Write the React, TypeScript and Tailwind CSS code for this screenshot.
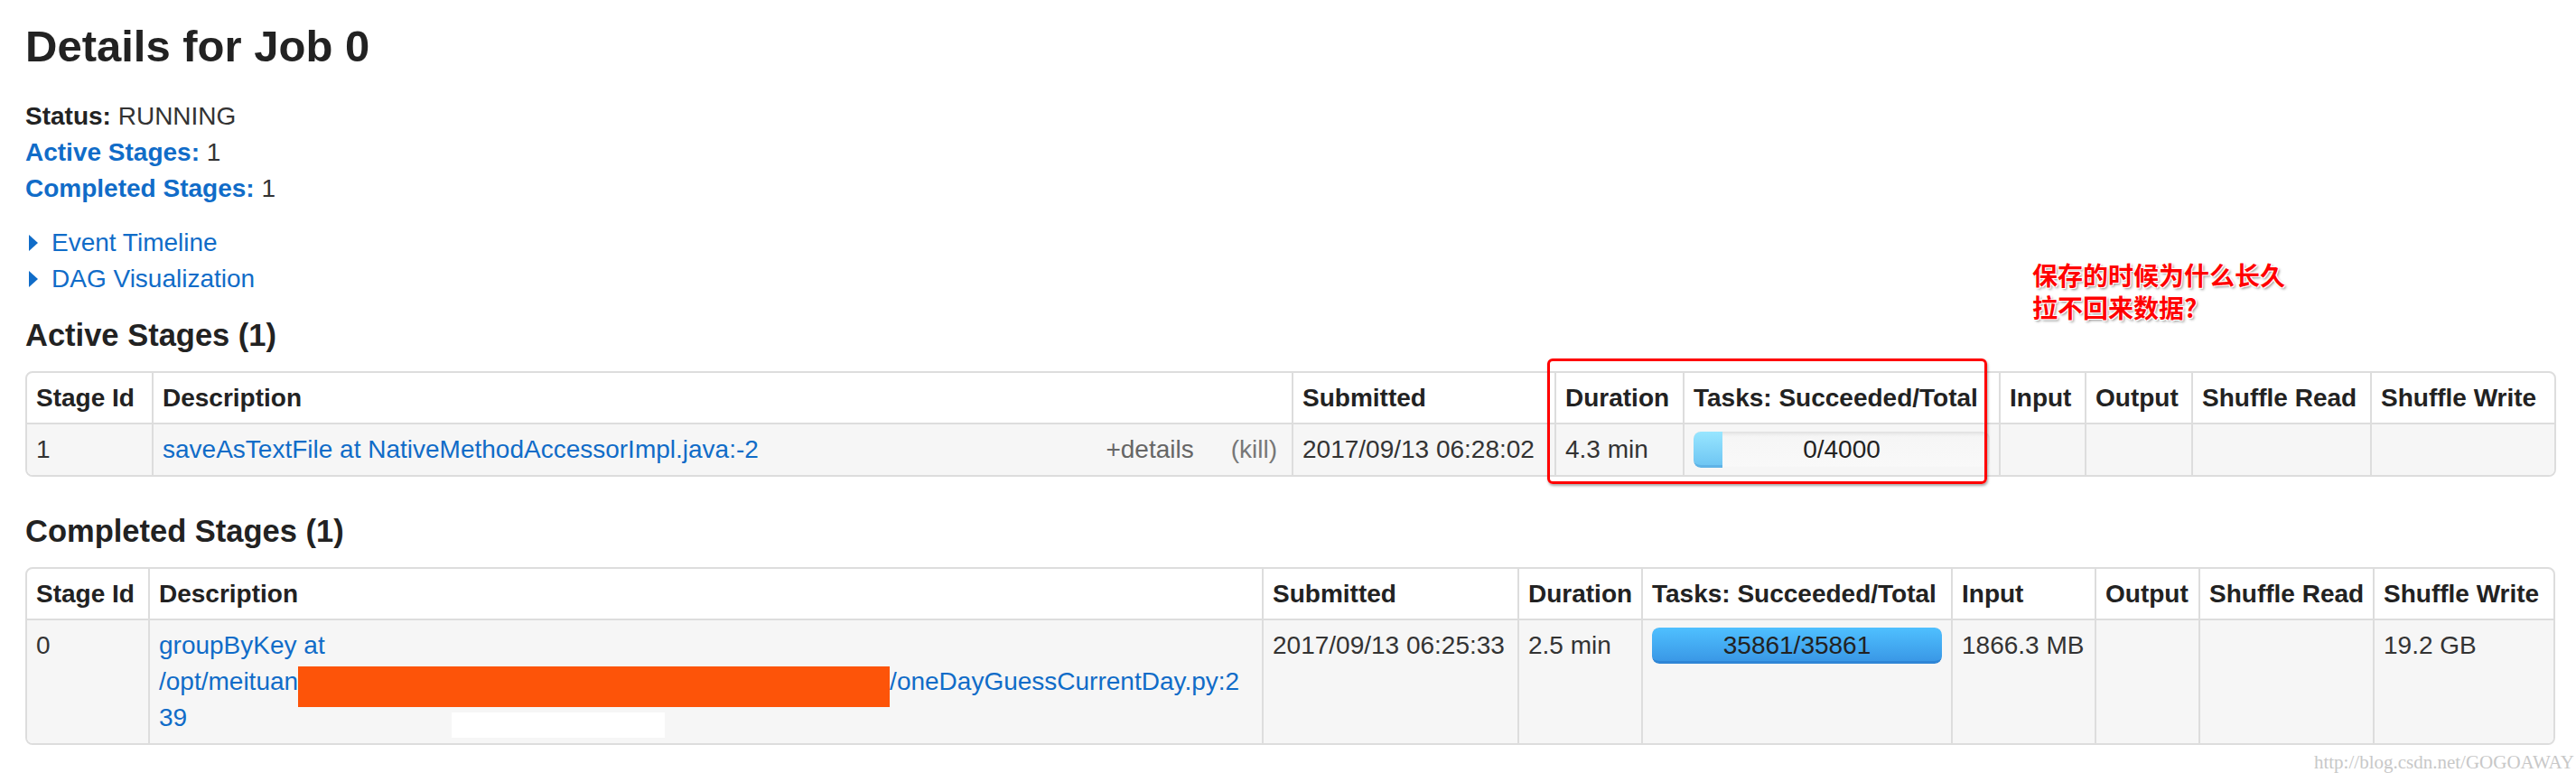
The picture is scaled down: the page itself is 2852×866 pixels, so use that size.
import React from "react";

const LINK = "text-[#106cc8]";

const activeCols = [138, 1262, 291, 142, 350, 95, 118, 198, 204];
const completedCols = [134, 1233, 283, 137, 343, 159, 115, 193, 200];

const headers = [
  "Stage Id",
  "Description",
  "Submitted",
  "Duration",
  "Tasks: Succeeded/Total",
  "Input",
  "Output",
  "Shuffle Read",
  "Shuffle Write",
];

const Triangle = () => (
  <span className="inline-block w-0 h-0 ml-[4px] border-y-[9.5px] border-y-transparent border-l-[10px] border-l-[#106cc8]" />
);

// progress bar like spark's, running = light blue sliver, completed = full blue
const Progress = ({ label, done }: { label: string; done: boolean }) => {
  return (
    <div className="relative h-[40px] rounded-[8px] overflow-hidden bg-gradient-to-b from-[#f5f5f5] to-[#f9f9f9] shadow-[inset_0_2px_4px_rgba(0,0,0,0.1)]">
      {done ? (
        <div className="absolute inset-0 rounded-[8px] bg-gradient-to-b from-[#4fc0ff] to-[#3a98e6] border-b-[3px] border-[#2f86d6]" />
      ) : (
        <div className="absolute left-0 top-0 bottom-0 w-[32px] rounded-l-[8px] bg-gradient-to-b from-[#98e6ff] to-[#6fc6f3] border-b-[3px] border-[#5fb3e6]" />
      )}
      <span className="absolute inset-0 text-center leading-[40px] text-[#222]">{label}</span>
    </div>
  );
};

const StageTable = ({ cols, cells }: { cols: number[]; cells: React.ReactNode[] }) => {
  const total = cols.reduce((a, b) => a + b, 0);
  return (
    <table
      className="table-fixed border-separate border-spacing-0 border-2 border-[#ddd] rounded-[8px] text-[28px] leading-[40px]"
      style={{ width: total }}
    >
      <colgroup>
        {cols.map((w, i) => (
          <col key={i} style={{ width: w }} />
        ))}
      </colgroup>
      <thead>
        <tr>
          {headers.map((h, i) => (
            <th
              key={h}
              className={
                "px-[10px] pt-[8px] pb-[7px] text-left font-bold whitespace-nowrap text-[#222] " +
                (i > 0 ? "border-l-2 border-[#ddd]" : "")
              }
            >
              {h}
            </th>
          ))}
        </tr>
      </thead>
      <tbody>
        <tr>
          {cells.map((c, i) => (
            <td
              key={i}
              className={
                "relative px-[10px] py-[8px] align-top bg-[#f6f6f6] border-t-2 border-[#ddd] whitespace-nowrap " +
                (i > 0 ? "border-l-2 " : "rounded-bl-[6px] ") +
                (i === cells.length - 1 ? "rounded-br-[6px]" : "")
              }
            >
              {c}
            </td>
          ))}
        </tr>
      </tbody>
    </table>
  );
};

export default function App() {
  return (
    <div className="relative w-[2852px] h-[866px] overflow-hidden bg-white text-[#333] font-['Liberation_Sans',Arial,sans-serif]">
      <div className="pl-[28px] pr-[25px] pt-[24px]">
        <h1 className="text-[49px] leading-[54px] font-bold text-[#222]">Details for Job 0</h1>

        <ul className="mt-[31px] text-[28px] leading-[40px]">
          <li>
            <strong className="text-[#222]">Status:</strong> RUNNING
          </li>
          <li>
            <a className={"font-bold " + LINK}>Active Stages:</a> 1
          </li>
          <li>
            <a className={"font-bold " + LINK}>Completed Stages:</a> 1
          </li>
        </ul>

        <ul className={"mt-[20px] text-[28px] leading-[40px] " + LINK}>
          <li className="flex items-center gap-[15px]">
            <Triangle />
            <span>Event Timeline</span>
          </li>
          <li className="flex items-center gap-[15px]">
            <Triangle />
            <span>DAG Visualization</span>
          </li>
        </ul>

        <h4 className="mt-[22px] text-[34.5px] leading-[40px] font-bold text-[#222]">Active Stages (1)</h4>
        <div className="mt-[20px]">
          <StageTable
            cols={activeCols}
            cells={[
              "1",
              <div className="flex justify-between pr-[6px]">
                <a className={LINK}>saveAsTextFile at NativeMethodAccessorImpl.java:-2</a>
                <div className="flex gap-[41px] text-[#777]">
                  <span className="text-[#666]">+details</span>
                  <a>(kill)</a>
                </div>
              </div>,
              "2017/09/13 06:28:02",
              "4.3 min",
              <Progress label="0/4000" done={false} />,
              "",
              "",
              "",
              "",
            ]}
          />
        </div>

        <h4 className="mt-[40px] text-[34.5px] leading-[40px] font-bold text-[#222]">Completed Stages (1)</h4>
        <div className="mt-[20px]">
          <StageTable
            cols={completedCols}
            cells={[
              "0",
              <>
                <a className={LINK}>
                  groupByKey at
                  <br />
                  /opt/meituan
                  <span className="relative top-[3px] inline-block align-top w-[655px] h-[45px] -mb-[5px] bg-[#fd5409]" />
                  /oneDayGuessCurrentDay.py:2
                  <br />
                  39
                </a>
                <span className="absolute left-[334px] top-[102px] w-[236px] h-[28px] bg-white" />
              </>,
              "2017/09/13 06:25:33",
              "2.5 min",
              <Progress label="35861/35861" done={true} />,
              "1866.3 MB",
              "",
              "",
              "19.2 GB",
            ]}
          />
        </div>
      </div>

      {/* annotation drawn over the screenshot */}
      <div className="absolute left-[1713px] top-[397px] w-[487px] h-[139px] border-[3px] border-[#f00] rounded-[6px] shadow-[1px_2px_3px_rgba(0,0,0,0.35)]" />
      <div className="absolute left-[2250px] top-[286px] text-[28px] leading-[36px] font-bold text-[#f00] font-['Noto_Sans_CJK_SC',sans-serif] [text-shadow:-1px_-1px_0_#fff,1px_-1px_0_#fff,-1px_1px_0_#fff,1px_1px_0_#fff,2px_2px_3px_rgba(0,0,0,0.45)]">
        <div>保存的时候为什么长久</div>
        <div>拉不回来数据?</div>
      </div>

      <div className="absolute right-[2px] top-[832px] text-[21px] leading-[24px] text-[#c8c8c8] font-['Liberation_Serif',serif]">
        http://blog.csdn.net/GOGOAWAY
      </div>
    </div>
  );
}
